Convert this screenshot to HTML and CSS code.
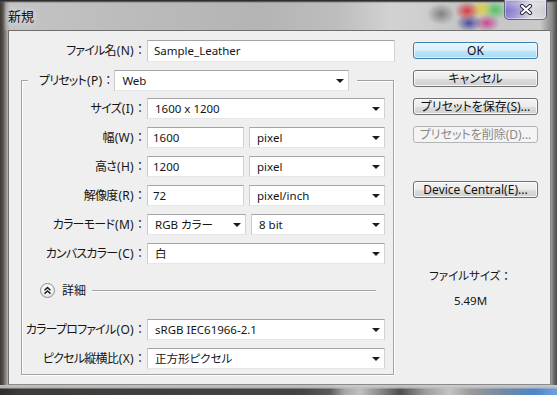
FILE: index.html
```html
<!DOCTYPE html>
<html lang="ja">
<head>
<meta charset="utf-8">
<title>新規</title>
<link rel="stylesheet" href="styles.css">
</head>
<body>
<div class="window">
  <div class="titlebar">
    <span class="title">新規</span>
    <button class="close" aria-label="閉じる">
      <svg width="14" height="11" viewBox="0 0 14 11">
        <path d="M3 2 L11 9 M11 2 L3 9" stroke="#2a2a3a" stroke-width="4.2" stroke-linecap="round"/>
        <path d="M3 2 L11 9 M11 2 L3 9" stroke="#ffffff" stroke-width="2.2" stroke-linecap="round"/>
      </svg>
    </button>
  </div>
  <div class="client">
    <div class="form">
      <div class="name-row">
        <span class="lbl">ファイル名<span class="key">(N)</span><span class="colon">：</span></span>
        <div class="field input">Sample_Leather</div>
      </div>
      <fieldset class="group">
        <legend class="legend">
          <span class="lbl legend-lbl">プリセット<span class="key">(P)</span><span class="colon">：</span></span>
          <div class="field combo preset"><span>Web</span><i class="arrow"></i></div>
        </legend>
        <div class="grid">
          <span class="lbl">サイズ<span class="key">(I)</span><span class="colon">：</span></span>
          <div class="field combo"><span>1600 x 1200</span><i class="arrow"></i></div>

          <span class="lbl">幅<span class="key">(W)</span><span class="colon">：</span></span>
          <div class="pair">
            <div class="field input num">1600</div>
            <div class="field combo"><span>pixel</span><i class="arrow"></i></div>
          </div>

          <span class="lbl">高さ<span class="key">(H)</span><span class="colon">：</span></span>
          <div class="pair">
            <div class="field input num">1200</div>
            <div class="field combo"><span>pixel</span><i class="arrow"></i></div>
          </div>

          <span class="lbl">解像度<span class="key">(R)</span><span class="colon">：</span></span>
          <div class="pair">
            <div class="field input num">72</div>
            <div class="field combo"><span>pixel/inch</span><i class="arrow"></i></div>
          </div>

          <span class="lbl">カラーモード<span class="key">(M)</span><span class="colon">：</span></span>
          <div class="pair mode">
            <div class="field combo"><span>RGB カラー</span><i class="arrow"></i></div>
            <div class="field combo"><span>8 bit</span><i class="arrow"></i></div>
          </div>

          <span class="lbl">カンバスカラー<span class="key">(C)</span><span class="colon">：</span></span>
          <div class="field combo"><span>白</span><i class="arrow"></i></div>

          <div class="details">
            <span class="toggle">
              <svg width="15" height="15" viewBox="0 0 15 15">
                <path d="M4.5 7.2 L7.5 4.6 L10.5 7.2" fill="none" stroke="#1e1e1e" stroke-width="1.5"/>
                <path d="M4.5 10.6 L7.5 8 L10.5 10.6" fill="none" stroke="#1e1e1e" stroke-width="1.5"/>
              </svg>
            </span>
            <span class="details-lbl">詳細</span>
            <span class="rule"></span>
          </div>

          <span class="lbl">カラープロファイル<span class="key">(O)</span><span class="colon">：</span></span>
          <div class="field combo"><span>sRGB IEC61966-2.1</span><i class="arrow"></i></div>

          <span class="lbl">ピクセル縦横比<span class="key">(X)</span><span class="colon">：</span></span>
          <div class="field combo"><span>正方形ピクセル</span><i class="arrow"></i></div>
        </div>
      </fieldset>
    </div>
    <div class="side">
      <button class="btn default">OK</button>
      <button class="btn">キャンセル</button>
      <button class="btn">プリセットを保存(S)...</button>
      <button class="btn" disabled>プリセットを削除(D)...</button>
      <button class="btn device">Device Central(E)...</button>
      <div class="filesize">
        <span>ファイルサイズ<span class="colon">：</span></span>
        <span class="size-val">5.49M</span>
      </div>
    </div>
  </div>
  <div class="bottom-frame"></div>
</div>
</body>
</html>
```

FILE: styles.css
```css
html, body {
  margin: 0;
  padding: 0;
}

body {
  width: 557px;
  height: 395px;
  overflow: hidden;
  font-family: "Noto Sans", "Noto Sans CJK JP", sans-serif;
  font-size: 12px;
  color: #151515;
  font-feature-settings: "palt";
}

.window {
  height: 395px;
  display: flex;
  flex-direction: column;
  background:
    linear-gradient(to right,
      #3c3834 0px, #57524c 3px, #8f8b86 6px, #b9b9b9 8px,
      #c2c2c2 549px, #9a9a9a 551px, #6b6b6b 554px, #4a4a4a 557px);
}

/* ---------- title bar ---------- */
.titlebar {
  height: 30px;
  flex: none;
  display: flex;
  align-items: flex-start;
  background:
    linear-gradient(to bottom, #2e2e2e 0px, #2e2e2e 1px, rgba(90,90,90,0.6) 2px, transparent 3px),
    radial-gradient(ellipse 12px 10px at 467px 11px, rgba(215,45,45,0.9), transparent),
    radial-gradient(ellipse 12px 10px at 481px 9px, rgba(225,205,55,0.9), transparent),
    radial-gradient(ellipse 13px 10px at 495px 10px, rgba(70,195,90,0.9), transparent),
    radial-gradient(ellipse 13px 9px at 469px 23px, rgba(55,55,150,0.85), transparent),
    radial-gradient(ellipse 13px 9px at 487px 23px, rgba(195,55,135,0.85), transparent),
    radial-gradient(ellipse 14px 11px at 441px 14px, rgba(105,105,105,0.75), transparent),
    linear-gradient(to right,
      #3c3834 0px, #57524c 3px, #a6a6a6 6px, #c4c4c4 10px,
      #bcbcbc 120px, #b4b4b4 260px, #bebebe 340px, #d2d2d2 390px,
      #cfcfcf 420px, #c4c4c4 460px, #cacaca 540px, #8a8a8a 552px, #4a4a4a 557px);
}

.title {
  padding: 8px 0 0 8px;
  font-size: 13px;
  line-height: 16px;
  color: #111;
  text-shadow: 0 0 6px rgba(255,255,255,0.9);
}

.close {
  margin-left: auto;
  margin-right: 10px;
  width: 43px;
  height: 20px;
  padding: 0;
  border: 1px solid rgba(70,70,80,0.75);
  border-top: none;
  border-radius: 0 0 5px 5px;
  background:
    linear-gradient(to bottom, rgba(255,255,255,0.45), rgba(255,255,255,0.1) 55%, rgba(255,255,255,0.25)),
    linear-gradient(to right, rgba(90,80,200,0.85) 0%, rgba(130,110,210,0.7) 30%, rgba(215,215,225,0.8) 65%, rgba(200,200,205,0.8) 100%);
  box-shadow: inset 0 0 0 1px rgba(255,255,255,0.45);
  display: flex;
  align-items: center;
  justify-content: center;
}

/* ---------- client ---------- */
.client {
  flex: 1;
  margin: 0 6px 0 8px;
  border: 1px solid #6f6f6f;
  border-right-color: #8a8a8a;
  border-bottom-color: #8a8a8a;
  background: #efefef;
  display: flex;
}

.form {
  width: 392px;
  flex: none;
  padding-top: 9px;
  display: flex;
  flex-direction: column;
}

.lbl {
  text-align: right;
  white-space: nowrap;
  line-height: 21px;
  font-size: 12px;
  letter-spacing: -0.8px;
  color: #151515;
}

.key {
  letter-spacing: 0.3px;
  margin-left: 1px;
}

.colon {
  font-feature-settings: normal;
  font-size: 12px;
  letter-spacing: 0;
}

.name-row {
  display: grid;
  grid-template-columns: 137px 248px;
  column-gap: 1px;
  height: 22px;
}

.field {
  box-sizing: border-box;
  height: 21px;
  background: #ffffff;
  border: 1px solid;
  border-color: #a5a5a5 #d2d2d2 #e6e6e6 #cbcbcb;
  line-height: 19px;
  font-size: 11.5px;
  white-space: nowrap;
  overflow: hidden;
  color: #151515;
}

.name-row .field {
  height: 22px;
  line-height: 20px;
}

.input {
  padding-left: 6px;
}

.input.num {
  padding-left: 5px;
}

.combo {
  display: flex;
  align-items: center;
  justify-content: space-between;
  padding: 0 4px 0 7px;
}

.arrow {
  width: 0;
  height: 0;
  border-top: 4px solid #1c1c1c;
  border-left: 4px solid transparent;
  border-right: 4px solid transparent;
  margin-top: 1px;
}

/* ---------- group box ---------- */
.group {
  margin: 8px 0 0 12px;
  padding: 0 8px 5px 0;
  border: 1px solid #a2a2a2;
  box-shadow: 1px 1px 0 #ffffff, inset 1px 1px 0 #ffffff;
  min-inline-size: 0;
  width: 373px;
  box-sizing: border-box;
}

.legend {
  margin-left: 6px;
  padding: 0 8px 0 11px;
  display: flex;
  align-items: center;
  background: #efefef;
}

.legend-lbl {
  flex: none;
  text-align: left;
}

.preset {
  flex: none;
  width: 235px;
}

.grid {
  padding-top: 7px;
  display: grid;
  grid-template-columns: 124px 238px;
  column-gap: 1px;
  row-gap: 8px;
  grid-auto-rows: auto;
}

.pair {
  display: flex;
  gap: 5px;
  height: 21px;
}

.pair > .input {
  width: 97px;
  flex: none;
}

.pair > .combo:last-child {
  flex: 1;
}

.pair.mode > .combo:first-child {
  width: 99px;
  flex: none;
}

.details {
  grid-column: 1 / -1;
  height: 15px;
  margin: 11px 0 13px 18px;
  display: flex;
  align-items: center;
}

.toggle {
  width: 15px;
  height: 15px;
  box-sizing: border-box;
  border: 1px solid #8e8e8e;
  border-radius: 50%;
  background: radial-gradient(circle at 50% 35%, #ffffff 0%, #f3f3f3 50%, #d6d6d6 100%);
  display: flex;
  align-items: center;
  justify-content: center;
}

.toggle svg {
  margin: -1px;
}

.details-lbl {
  margin-left: 7px;
  line-height: 15px;
  font-size: 12px;
}

.rule {
  flex: 1;
  height: 0;
  border-top: 1px solid #a2a2a2;
  border-bottom: 1px solid #ffffff;
  margin: 1px 9px 0 6px;
}

/* ---------- right column ---------- */
.side {
  flex: 1;
  padding: 11px 11px 0 12px;
  display: flex;
  flex-direction: column;
  align-items: flex-start;
  gap: 11px;
}

.btn {
  width: 125px;
  height: 17px;
  padding: 0;
  font: inherit;
  font-size: 12px;
  line-height: 15px;
  color: #111;
  border: 1px solid #707070;
  border-radius: 3px;
  background: linear-gradient(to bottom, #f3f3f3 0%, #ebebeb 50%, #dddddd 51%, #cfcfcf 100%);
  box-shadow: inset 0 0 0 1px rgba(255,255,255,0.8);
}

.btn.default {
  border-color: #3c7fb1;
  background: linear-gradient(to bottom, #e9f5fc 0%, #d6eefb 50%, #bde4f8 51%, #a9daf4 100%);
  box-shadow: inset 0 0 0 1px rgba(255,255,255,0.6);
}

.btn:disabled {
  color: #8a8a8a;
  border-color: #b1b5b8;
  background: #f4f4f4;
  box-shadow: none;
}

.btn.device {
  margin-top: 27px;
}

.filesize {
  width: 115px;
  margin-top: 58px;
  display: flex;
  flex-direction: column;
  align-items: center;
  gap: 8px;
  line-height: 17px;
  font-size: 11.5px;
}

.filesize .colon {
  font-size: 11.5px;
}

/* ---------- bottom frame ---------- */
.bottom-frame {
  height: 10px;
  flex: none;
  background:
    linear-gradient(to bottom, rgba(210,210,210,0.9) 0px, rgba(190,190,190,0.9) 3px, transparent 4px),
    linear-gradient(to right,
      #2f2c29 0px, #3e3b38 20px, #444 300px, #5a5a5a 330px, #a8a8a8 345px,
      #c0c0c0 360px, #8a8a8a 380px, #4e4e4e 400px, #9c9c9c 425px, #c4c4c4 450px,
      #9a9a9a 470px, #6f88a8 505px, #4d86c8 535px, #6da2dc 557px);
}
```
